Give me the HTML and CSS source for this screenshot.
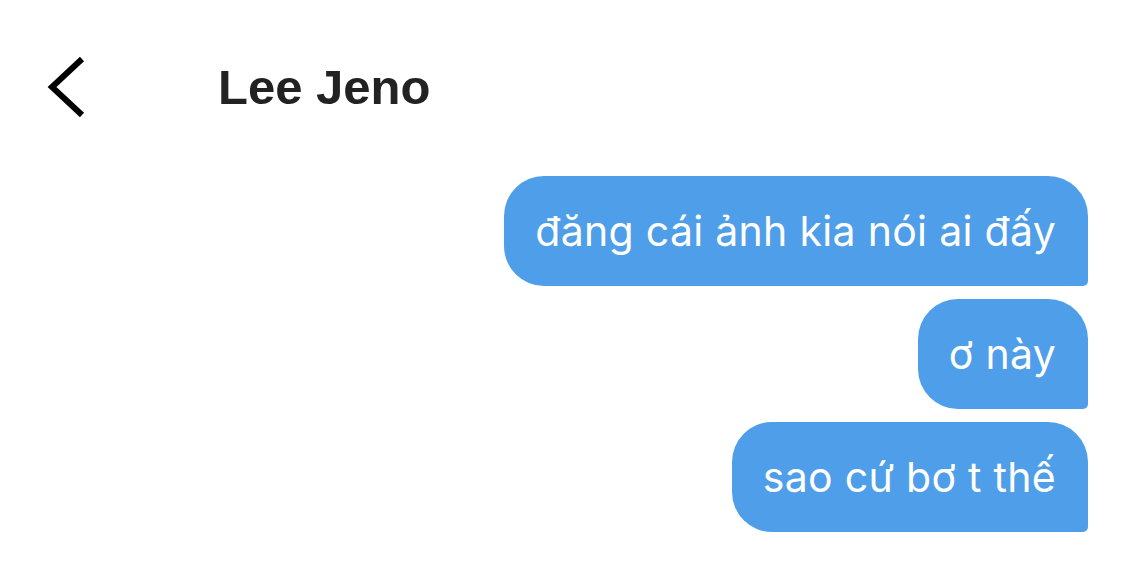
FILE: index.html
```html
<!DOCTYPE html>
<html lang="vi">
<head>
<meta charset="utf-8">
<link rel="stylesheet" href="styles.css">
</head>
<body>
<div class="screen">
  <header class="header">
    <svg class="back" width="40" height="62" viewBox="0 0 40 62" aria-hidden="true">
      <polyline points="35,3 5,31 35,59" fill="none" stroke="#000" stroke-width="6" stroke-linecap="butt" stroke-linejoin="miter"/>
    </svg>
    <h1 class="title">Lee Jeno</h1>
  </header>
  <main class="messages">
    <div class="bubble">đăng cái ảnh kia nói ai đấy</div>
    <div class="bubble">ơ này</div>
    <div class="bubble">sao cứ bơ t thế</div>
  </main>
</div>
</body>
</html>
```

FILE: styles.css
```css
html, body {
  margin: 0;
  padding: 0;
  background: #ffffff;
}

.screen {
  width: 1124px;
  height: 585px;
  overflow: hidden;
  font-family: Inter, "Noto Sans", "Liberation Sans", sans-serif;
}

.header {
  display: flex;
  align-items: center;
  height: 62px;
  margin-top: 56px;
  padding-left: 47px;
}

.back {
  display: block;
  flex: none;
}

.title {
  margin: 0 0 0 131px;
  font-family: "Liberation Sans", Arial, sans-serif;
  font-weight: 700;
  font-size: 49px;
  line-height: 62px;
  color: #222222;
}

.messages {
  display: flex;
  flex-direction: column;
  align-items: flex-end;
  gap: 13px;
  margin-top: 58px;
  padding-right: 36px;
}

.bubble {
  background: #4f9ee9;
  color: #ffffff;
  font-size: 41px;
  line-height: 50px;
  letter-spacing: 0.3px;
  padding: 30px 32px 30px 31px;
  border-radius: 40px 40px 5px 40px;
  white-space: nowrap;
}
```
